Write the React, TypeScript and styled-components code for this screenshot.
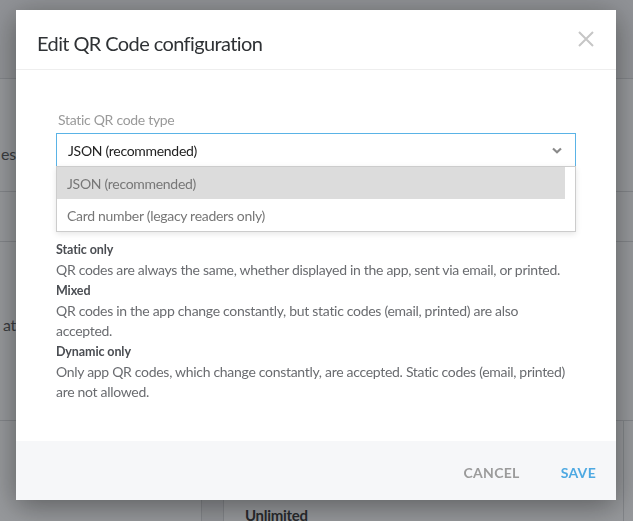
import React from 'react'
import styled, {createGlobalStyle} from 'styled-components'

const GlobalStyle = createGlobalStyle`
  html, body {
    margin: 0;
    padding: 0;
    width: 633px;
    height: 521px;
    overflow: hidden;
  }
  body {
    font-family: 'Lato', 'Noto Sans', sans-serif;
    letter-spacing: -0.3px;
    background: #fff;
  }
`

const options = ['JSON (recommended)', 'Card number (legacy readers only)']

const modes = [
  {
    title: 'Static only',
    text: 'QR codes are always the same, whether displayed in the app, sent via email, or printed.',
  },
  {
    title: 'Mixed',
    text: 'QR codes in the app change constantly, but static codes (email, printed) are also accepted.',
  },
  {
    title: 'Dynamic only',
    text: 'Only app QR codes, which change constantly, are accepted. Static codes (email, printed) are not allowed.',
  },
]

const App = () => {
  return (
    <>
      <GlobalStyle />
      <Page>
        <TopBar />
        <Row h={113}>
          <CutText>ess</CutText>
        </Row>
        <Row h={50} />
        <Row h={179} align="center">
          <CutText indent={3}>at</CutText>
        </Row>
        <BottomRow>
          <Cell w={202} />
          <Cell w={21} shaded />
          <Cell w={400}>
            <Strong>Unlimited</Strong>
          </Cell>
        </BottomRow>
      </Page>
      <Backdrop />
      <Modal>
        <Header>
          <Title>Edit QR Code configuration</Title>
          <Close aria-label="close">
            <svg width="16" height="16" viewBox="0 0 16 16">
              <path d="M1 1 L15 15 M15 1 L1 15" stroke="#c6c6c6" strokeWidth="2" />
            </svg>
          </Close>
        </Header>
        <Body>
          <Label>Static QR code type</Label>
          <SelectWrap>
            <Select>
              <span>JSON (recommended)</span>
              <svg width="10" height="7" viewBox="0 0 10 7">
                <polyline points="1,1.5 5,5.2 9,1.5" fill="none" stroke="#8a8a8a" strokeWidth="2.2" />
              </svg>
            </Select>
            <Menu>
              {options.map((o, i) => (
                <Option key={o} active={i === 0}>
                  {o}
                </Option>
              ))}
            </Menu>
          </SelectWrap>
          <Modes>
            {modes.map((m) => (
              <React.Fragment key={m.title}>
                <ModeTitle>{m.title}</ModeTitle>
                <ModeText>{m.text}</ModeText>
              </React.Fragment>
            ))}
          </Modes>
        </Body>
        <Footer>
          <Action>Cancel</Action>
          <Action primary>Save</Action>
        </Footer>
      </Modal>
    </>
  )
}

const Page = styled.div`
  width: 633px;
  height: 521px;
  display: flex;
  flex-direction: column;
  background: #fff;
`
const TopBar = styled.div`
  height: 79px;
  background: #f4f4f5;
  border-bottom: 1px solid #dadbdd;
  box-sizing: border-box;
`
const Row = styled.div<{h: number; align?: string}>`
  height: ${(p) => p.h}px;
  box-sizing: border-box;
  border-bottom: 1px solid #dadbdd;
  display: flex;
  align-items: ${(p) => p.align || 'flex-end'};
  padding-bottom: ${(p) => (p.align ? 14 : 28)}px;
`
const CutText = styled.span<{indent?: number}>`
  font-size: 16px;
  color: #555;
  margin-left: ${(p) => p.indent ?? 1}px;
`
const BottomRow = styled.div`
  flex: 1;
  display: flex;
`
const Cell = styled.div<{w: number; shaded?: boolean}>`
  width: ${(p) => p.w}px;
  border-right: 1px solid #dadbdd;
  background: ${(p) => (p.shaded ? '#f4f4f5' : '#fff')};
  display: flex;
  align-items: flex-end;
  padding-left: 21px;
  box-sizing: border-box;
`
const Strong = styled.span`
  font-weight: 700;
  font-size: 15px;
  color: #333;
  margin-bottom: -3px;
`
const Backdrop = styled.div`
  position: fixed;
  inset: 0;
  background: rgba(28, 32, 40, 0.46);
`
const Modal = styled.div`
  position: fixed;
  left: 16px;
  top: 10px;
  width: 600px;
  height: 490px;
  background: #fff;
  box-shadow: 0 6px 28px rgba(0, 0, 0, 0.4);
  display: flex;
  flex-direction: column;
`
const Header = styled.div`
  height: 60px;
  box-sizing: border-box;
  border-bottom: 1px solid #eeeeee;
  display: flex;
  align-items: center;
  justify-content: space-between;
  padding: 6px 22px 0 21px;
`
const Title = styled.h2`
  margin: 0;
  font-size: 20px;
  font-weight: 400;
  letter-spacing: -0.6px;
  color: #2f3235;
`
const Close = styled.button`
  border: none;
  background: none;
  padding: 0;
  display: flex;
  margin-top: -8px;
  cursor: pointer;
`
const Body = styled.div`
  flex: 1;
  padding: 40px 40px 0;
`
const Label = styled.div`
  font-size: 14px;
  line-height: 20px;
  color: #9a9a9a;
  margin: 0 0 3px 2px;
`
const SelectWrap = styled.div`
  position: relative;
`
const Select = styled.div`
  height: 33px;
  box-sizing: border-box;
  border: 1px solid #5ab3e6;
  border-bottom: none;
  display: flex;
  align-items: center;
  justify-content: space-between;
  padding: 0 13px 0 11px;
  font-size: 14px;
  color: #222;
`
const Menu = styled.div`
  position: absolute;
  top: 100%;
  left: 0;
  right: 0;
  background: #fff;
  border: 1px solid #cccccc;
  box-shadow: 0 2px 6px rgba(0, 0, 0, 0.1);
  z-index: 2;
`
const Option = styled.div<{active?: boolean}>`
  height: 32px;
  display: flex;
  align-items: center;
  padding-left: 10px;
  margin-right: 10px;
  font-size: 14px;
  color: #777;
  background: ${(p) => (p.active ? '#dcdcdc' : 'transparent')};
`
const Modes = styled.div`
  margin-top: 74px;
  display: flex;
  flex-direction: column;
`
const ModeTitle = styled.div`
  font-size: 12.5px;
  font-weight: 700;
  line-height: 20px;
  letter-spacing: -0.1px;
  color: #4a4d52;
`
const ModeText = styled.div`
  font-size: 14px;
  line-height: 20.5px;
  color: #6a6c70;
`
const Footer = styled.div`
  height: 59px;
  background: #f6f7f9;
  display: flex;
  align-items: center;
  justify-content: flex-end;
  gap: 41px;
  padding: 3px 20px 0 0;
  box-sizing: border-box;
`
const Action = styled.button<{primary?: boolean}>`
  border: none;
  background: none;
  padding: 0;
  font-family: inherit;
  font-size: 14px;
  font-weight: 700;
  letter-spacing: 0.3px;
  text-transform: uppercase;
  color: ${(p) => (p.primary ? '#4ea9e2' : '#9b9b9b')};
  cursor: pointer;
`

export default App
